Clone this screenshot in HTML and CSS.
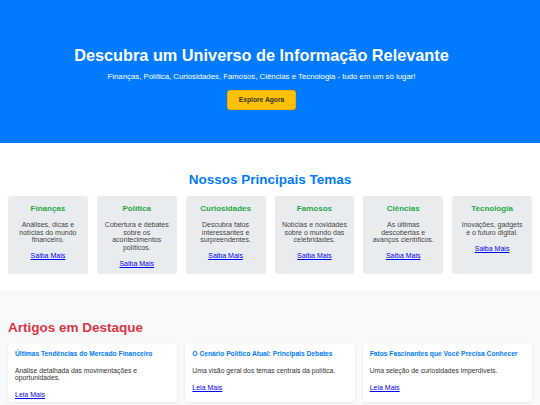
FILE: index.html
```html
<!DOCTYPE html>
<html lang="pt-BR">
<head>
  <meta charset="UTF-8" />
  <meta name="viewport" content="width=device-width, initial-scale=1.0"/>
  <title>Universo de Informação</title>
  <link rel="stylesheet" href="styles.css">
</head>
<body>
  <header class="hero">
    <h1>Descubra um Universo de Informação Relevante</h1>
    <p>Finanças, Política, Curiosidades, Famosos, Ciências e Tecnologia - tudo em um só lugar!</p>
    <a href="#temas" class="btn">Explore Agora</a>
  </header>

  <section class="themes" id="temas">
    <h2>Nossos Principais Temas</h2>
    <div class="theme-grid">
      <div class="theme">
        <h3>Finanças</h3>
        <p>Análises, dicas e notícias do mundo financeiro.</p>
        <a href="#">Saiba Mais</a>
      </div>
      <div class="theme">
        <h3>Política</h3>
        <p>Cobertura e debates sobre os acontecimentos políticos.</p>
        <a href="#">Saiba Mais</a>
      </div>
      <div class="theme">
        <h3>Curiosidades</h3>
        <p>Descubra fatos interessantes e surpreendentes.</p>
        <a href="#">Saiba Mais</a>
      </div>
      <div class="theme">
        <h3>Famosos</h3>
        <p>Notícias e novidades sobre o mundo das celebridades.</p>
        <a href="#">Saiba Mais</a>
      </div>
      <div class="theme">
        <h3>Ciências</h3>
        <p>As últimas descobertas e avanços científicos.</p>
        <a href="#">Saiba Mais</a>
      </div>
      <div class="theme">
        <h3>Tecnologia</h3>
        <p>Inovações, gadgets e o futuro digital.</p>
        <a href="#">Saiba Mais</a>
      </div>
    </div>
  </section>

  <section class="articles">
    <h2>Artigos em Destaque</h2>
    <div class="article-grid">
      <article class="article">
        <h3>Últimas Tendências do Mercado Financeiro</h3>
        <p>Análise detalhada das movimentações e oportunidades.</p>
        <a href="#">Leia Mais</a>
      </article>
      <article class="article">
        <h3>O Cenário Político Atual: Principais Debates</h3>
        <p>Uma visão geral dos temas centrais da política.</p>
        <a href="#">Leia Mais</a>
      </article>
      <article class="article">
        <h3>Fatos Fascinantes que Você Precisa Conhecer</h3>
        <p>Uma seleção de curiosidades imperdíveis.</p>
        <a href="#">Leia Mais</a>
      </article>
    </div>
  </section>
</body>
</html>
```

FILE: styles.css
```css
* {
  box-sizing: border-box;
}

body {
  font-family: 'Liberation Sans', Arial, sans-serif;
  margin: 0;
  color: #333;
  background-color: #fff;
}

a {
  color: #0000ee;
}

/* Hero */
.hero {
  background-color: #007bff;
  color: #fff;
  text-align: center;
  padding: 46px 17px 33px 0;
  display: flex;
  flex-direction: column;
  align-items: center;
}

.hero h1 {
  margin: 0 0 7.5px;
  font-size: 16.3px;
  line-height: 18px;
}

.hero p {
  margin: 0 0 8.5px;
  font-size: 7.8px;
  line-height: 10px;
}

.btn {
  display: block;
  background-color: #ffc107;
  border: 1px solid #e8ad00;
  color: #333;
  font-size: 6.7px;
  font-weight: bold;
  text-decoration: none;
  width: 69px;
  height: 20px;
  line-height: 18px;
  border-radius: 3px;
}

/* Themes */
.themes {
  padding: 29px 8px 17px;
  text-align: center;
}

.themes h2 {
  margin: 0 0 8px;
  color: #007bff;
  font-size: 13.5px;
  line-height: 16px;
}

.theme-grid {
  display: grid;
  grid-template-columns: repeat(6, 1fr);
  gap: 9px;
}

.theme {
  background-color: #e9ecef;
  border-radius: 3px;
  padding: 8px 7px;
  height: 78px;
  line-height: 8px;
}

.theme h3 {
  margin: 0 0 7px;
  color: #28a745;
  font-size: 8px;
  line-height: 10px;
}

.theme p {
  margin: 0 0 5.5px;
  font-size: 7px;
  line-height: 7.6px;
  color: #444;
}

.theme a {
  display: inline-block;
  font-size: 7px;
  line-height: 8px;
}

/* Articles */
.articles {
  background-color: #f8f9fa;
  padding: 28px 8px 20px;
}

.articles h2 {
  margin: 0 0 7px;
  color: #dc3545;
  font-size: 13.5px;
  line-height: 18px;
}

.article-grid {
  display: grid;
  grid-template-columns: repeat(3, 1fr);
  gap: 8px;
}

.article {
  background-color: #fff;
  border-radius: 3px;
  box-shadow: 0 1px 3px rgba(0, 0, 0, 0.08);
  padding: 6px 7px;
  height: 58px;
  line-height: 8px;
}

.article h3 {
  margin: 0 0 8.5px;
  color: #007bff;
  font-size: 6.7px;
  line-height: 8px;
}

.article p {
  margin: 0 0 6.5px;
  font-size: 6.8px;
  line-height: 7.7px;
}

.article a {
  display: inline-block;
  font-size: 7px;
  line-height: 8px;
}
```
